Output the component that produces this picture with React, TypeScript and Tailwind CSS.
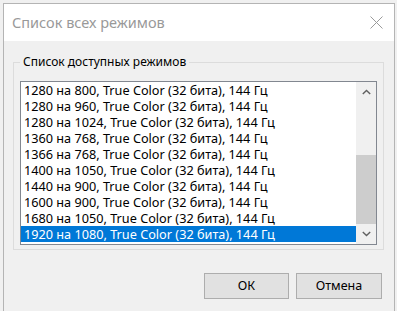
import React from 'react';

const modes = [
  '1280 на 800, True Color (32 бита), 144 Гц',
  '1280 на 960, True Color (32 бита), 144 Гц',
  '1280 на 1024, True Color (32 бита), 144 Гц',
  '1360 на 768, True Color (32 бита), 144 Гц',
  '1366 на 768, True Color (32 бита), 144 Гц',
  '1400 на 1050, True Color (32 бита), 144 Гц',
  '1440 на 900, True Color (32 бита), 144 Гц',
  '1600 на 900, True Color (32 бита), 144 Гц',
  '1680 на 1050, True Color (32 бита), 144 Гц',
  '1920 на 1080, True Color (32 бита), 144 Гц',
];

const font = { fontFamily: '"Noto Sans", "Open Sans", sans-serif' };

function Chevron({ down }: { down?: boolean }) {
  return (
    <svg width="9" height="6" viewBox="0 0 9 6" className="block">
      <path
        d={down ? 'M0.8 1 L4.5 4.6 L8.2 1' : 'M0.8 5 L4.5 1.4 L8.2 5'}
        fill="none"
        stroke="#606060"
        strokeWidth="1.4"
      />
    </svg>
  );
}

function Scrollbar() {
  return (
    <div className="flex w-[20px] shrink-0 flex-col bg-[#f0f0f0]">
      <div className="flex h-[20px] items-center justify-center">
        <Chevron />
      </div>
      <div className="flex flex-1 flex-col justify-end">
        <div className="h-[69px] bg-[#cdcdcd]" />
      </div>
      <div className="flex h-[20px] items-center justify-center">
        <Chevron down />
      </div>
    </div>
  );
}

export default function App() {
  const selected = modes.length - 1;

  return (
    <div className="h-[311px] w-[397px] overflow-hidden bg-[#f0f0f0] pl-[3px] pt-[3px]" style={font}>
      <div className="h-[320px] w-[392px] border border-[#b4b4b4] bg-[#f0f0f0]">
        {/* title bar */}
        <div className="flex h-[37px] items-center justify-between bg-white pl-[8px] pr-[11px]">
          <span className="text-[14.5px] text-[#999999]">Список всех режимов</span>
          <svg width="13" height="13" viewBox="0 0 13 13">
            <path d="M0.5 0.5 L12.5 12.5 M12.5 0.5 L0.5 12.5" stroke="#9a9a9a" strokeWidth="1" />
          </svg>
        </div>

        <div className="px-[9px]">
          <fieldset className="mt-[13px] w-[371px] border border-[#dcdcdc] px-[6px] pb-[4px]">
            <legend className="px-[3px] text-[12px] leading-[16px] text-black">Список доступных режимов</legend>
            <div className="mt-[11px] flex h-[164px] border border-[#828790] bg-white">
              <ul className="flex-1">
                {modes.map((m, i) => (
                  <li
                    key={m}
                    className={`h-[16px] whitespace-nowrap pl-[3px] text-[12.7px] leading-[16px] ${
                      i === selected ? 'bg-[#0078d7] text-white' : 'text-black'
                    }`}
                  >
                    {m}
                  </li>
                ))}
              </ul>
              <Scrollbar />
            </div>
          </fieldset>
        </div>

        <div className="mt-[23px] flex justify-end gap-[7px] pr-[12px]">
          <button className="h-[26px] w-[85px] border border-[#adadad] bg-[#e1e1e1] text-[12.5px] text-black">
            ОК
          </button>
          <button className="h-[26px] w-[86px] border border-[#adadad] bg-[#e1e1e1] text-[12.5px] text-black">
            Отмена
          </button>
        </div>
      </div>
    </div>
  );
}
